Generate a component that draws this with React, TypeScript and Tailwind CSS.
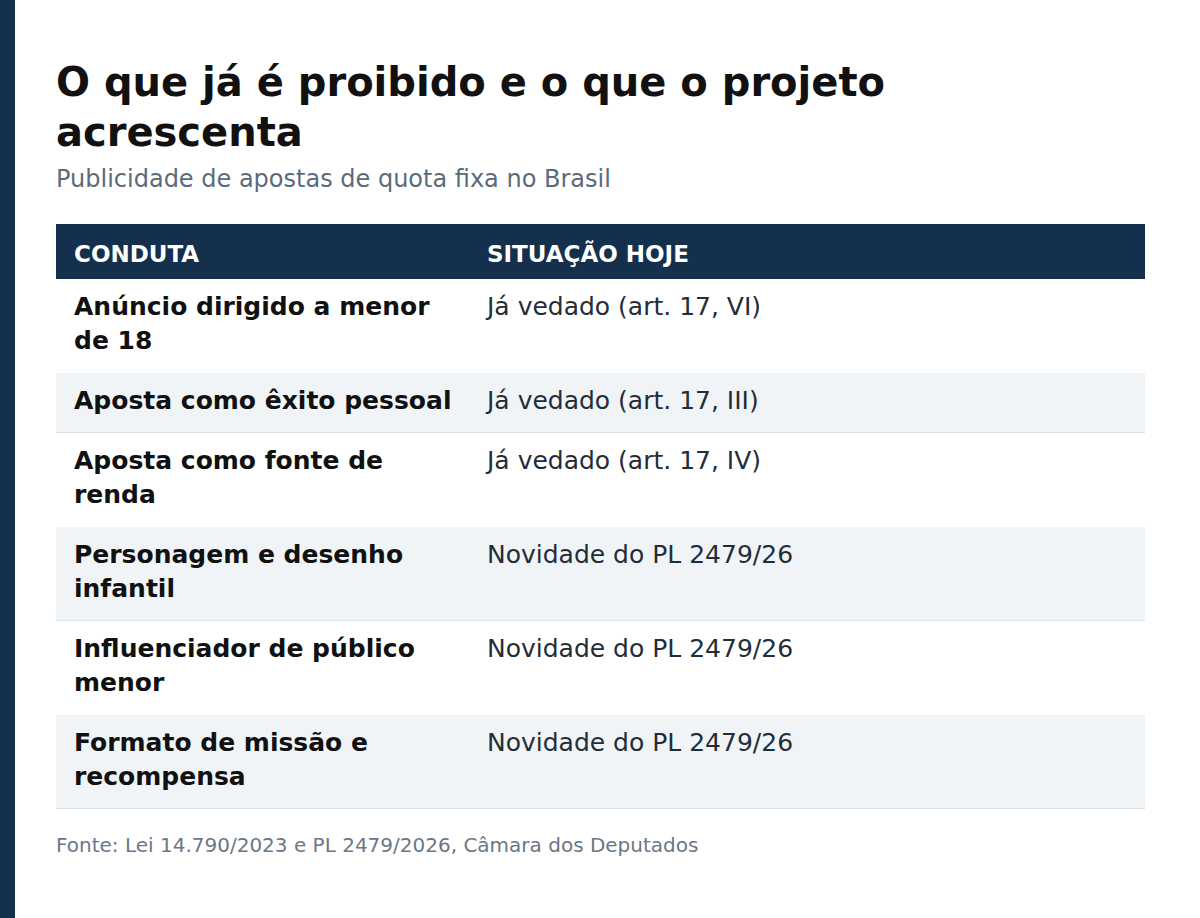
const rows = [
  { conduta: "Anúncio dirigido a menor de 18", situacao: "Já vedado (art. 17, VI)" },
  { conduta: "Aposta como êxito pessoal", situacao: "Já vedado (art. 17, III)" },
  { conduta: "Aposta como fonte de renda", situacao: "Já vedado (art. 17, IV)" },
  { conduta: "Personagem e desenho infantil", situacao: "Novidade do PL 2479/26" },
  { conduta: "Influenciador de público menor", situacao: "Novidade do PL 2479/26" },
  { conduta: "Formato de missão e recompensa", situacao: "Novidade do PL 2479/26" },
];

export default function App() {
  return (
    <div className="min-h-[918px] w-[1200px] border-l-[15px] border-[#14304d] bg-white pl-[41px] pr-[55px] pt-[57px] font-['DejaVu_Sans',sans-serif]">
      <h1 className="text-[40px] font-bold leading-[50px] text-[#111]">
        O que já é proibido e o que o projeto acrescenta
      </h1>
      <p className="mt-[8px] text-[24px] leading-[28px] text-[#5b6b7b]">
        Publicidade de apostas de quota fixa no Brasil
      </p>

      {/* tabela */}
      <div className="mt-[31px]">
        <div className="grid h-[55px] grid-cols-[413px_1fr] items-center bg-[#14304d] text-[23px] font-bold text-white">
          <div className="px-[18px] pt-[6px]">CONDUTA</div>
          <div className="px-[18px] pt-[6px]">SITUAÇÃO HOJE</div>
        </div>
        {rows.map((r, i) => (
          <div
            key={r.conduta}
            className={
              i % 2 === 1
                ? "grid grid-cols-[413px_1fr] border-b border-[#d9e1e9] bg-[#f0f4f7] pt-[11px] pb-[14.5px] text-[25px] leading-[34px]"
                : "grid grid-cols-[413px_1fr] pt-[11px] pb-[14.5px] text-[25px] leading-[34px]"
            }
          >
            <div className="pl-[18px] pr-[8px] font-bold text-[#111]">{r.conduta}</div>
            <div className="px-[18px] text-[#232d38]">{r.situacao}</div>
          </div>
        ))}
      </div>

      <p className="mt-[24px] text-[20px] leading-[24px] text-[#6b7785]">
        Fonte: Lei 14.790/2023 e PL 2479/2026, Câmara dos Deputados
      </p>
    </div>
  );
}
